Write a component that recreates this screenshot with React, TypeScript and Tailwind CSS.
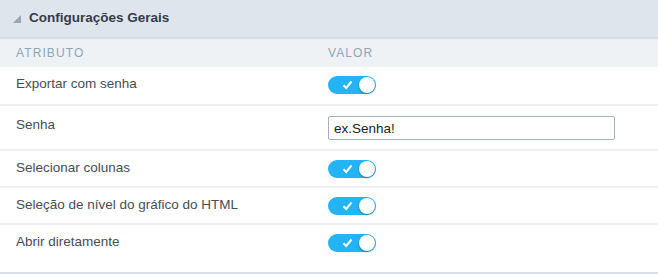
import React from "react";

const ROWS: { label: string; kind: "toggle" | "input"; value?: string; h: string }[] = [
  { label: "Exportar com senha", kind: "toggle", h: "h-[39px]" },
  { label: "Senha", kind: "input", value: "ex.Senha!", h: "h-[45px]" },
  { label: "Selecionar colunas", kind: "toggle", h: "h-[37px]" },
  { label: "Seleção de nível do gráfico do HTML", kind: "toggle", h: "h-[37px]" },
  { label: "Abrir diretamente", kind: "toggle", h: "h-[49px]" },
];

function Toggle() {
  return (
    <div className="relative h-[18px] w-[48px] rounded-full bg-[#24b3f5]">
      <svg className="absolute left-[14px] top-[4px]" width="11" height="10" viewBox="0 0 11 10">
        <path d="M1.5 5.2 L4.2 8 L9.5 1.5" fill="none" stroke="#fff" strokeWidth="2" />
      </svg>
      <div className="absolute right-[1px] top-[1px] h-[16px] w-[16px] rounded-full bg-white shadow-[0_1px_2px_rgba(0,0,0,0.35)]" />
    </div>
  );
}

export default function App() {
  return (
    <div className="h-[275px] w-[658px] bg-white font-['Liberation_Sans',Arial,sans-serif]">
      <div className="flex h-[39px] items-center gap-[8px] border-b-2 border-[#d3dbe3] bg-[#dfe5ec] pl-[13px]">
        <svg width="8" height="8" viewBox="0 0 8 8">
          <path d="M8 0 L8 8 L0 8 Z" fill="#9ca5af" />
        </svg>
        <span className="text-[13.5px] font-bold text-[#333c4a]">Configurações Gerais</span>
      </div>
      <div className="flex h-[28px] items-center bg-[#eef2f5] text-[12px] tracking-[1.1px] text-[#8fa5b7]">
        <div className="w-[328px] pl-[16px]">ATRIBUTO</div>
        <div>VALOR</div>
      </div>
      {ROWS.map((r, i) => (
        <div
          key={i}
          className={
            "flex text-[13.5px] leading-[20px] text-[#474d57] " +
            r.h +
            (i === ROWS.length - 1 ? " border-b-2 border-[#d8e0e8]" : " border-b-2 border-[#eef0f4]")
          }
        >
          <div className={"w-[328px] pl-[16px] " + (r.kind === "input" ? "pt-[9px]" : "pt-[7px]")}>
            {r.label}
          </div>
          <div className={r.kind === "input" ? "pt-[10px]" : "pt-[9px]"}>
            {r.kind === "toggle" ? (
              <Toggle />
            ) : (
              <input
                readOnly
                value={r.value}
                className="h-[24px] w-[287px] rounded-[2px] border border-[#a8b0ba] px-[5px] text-[13.5px] text-[#222] outline-none"
              />
            )}
          </div>
        </div>
      ))}
    </div>
  );
}
